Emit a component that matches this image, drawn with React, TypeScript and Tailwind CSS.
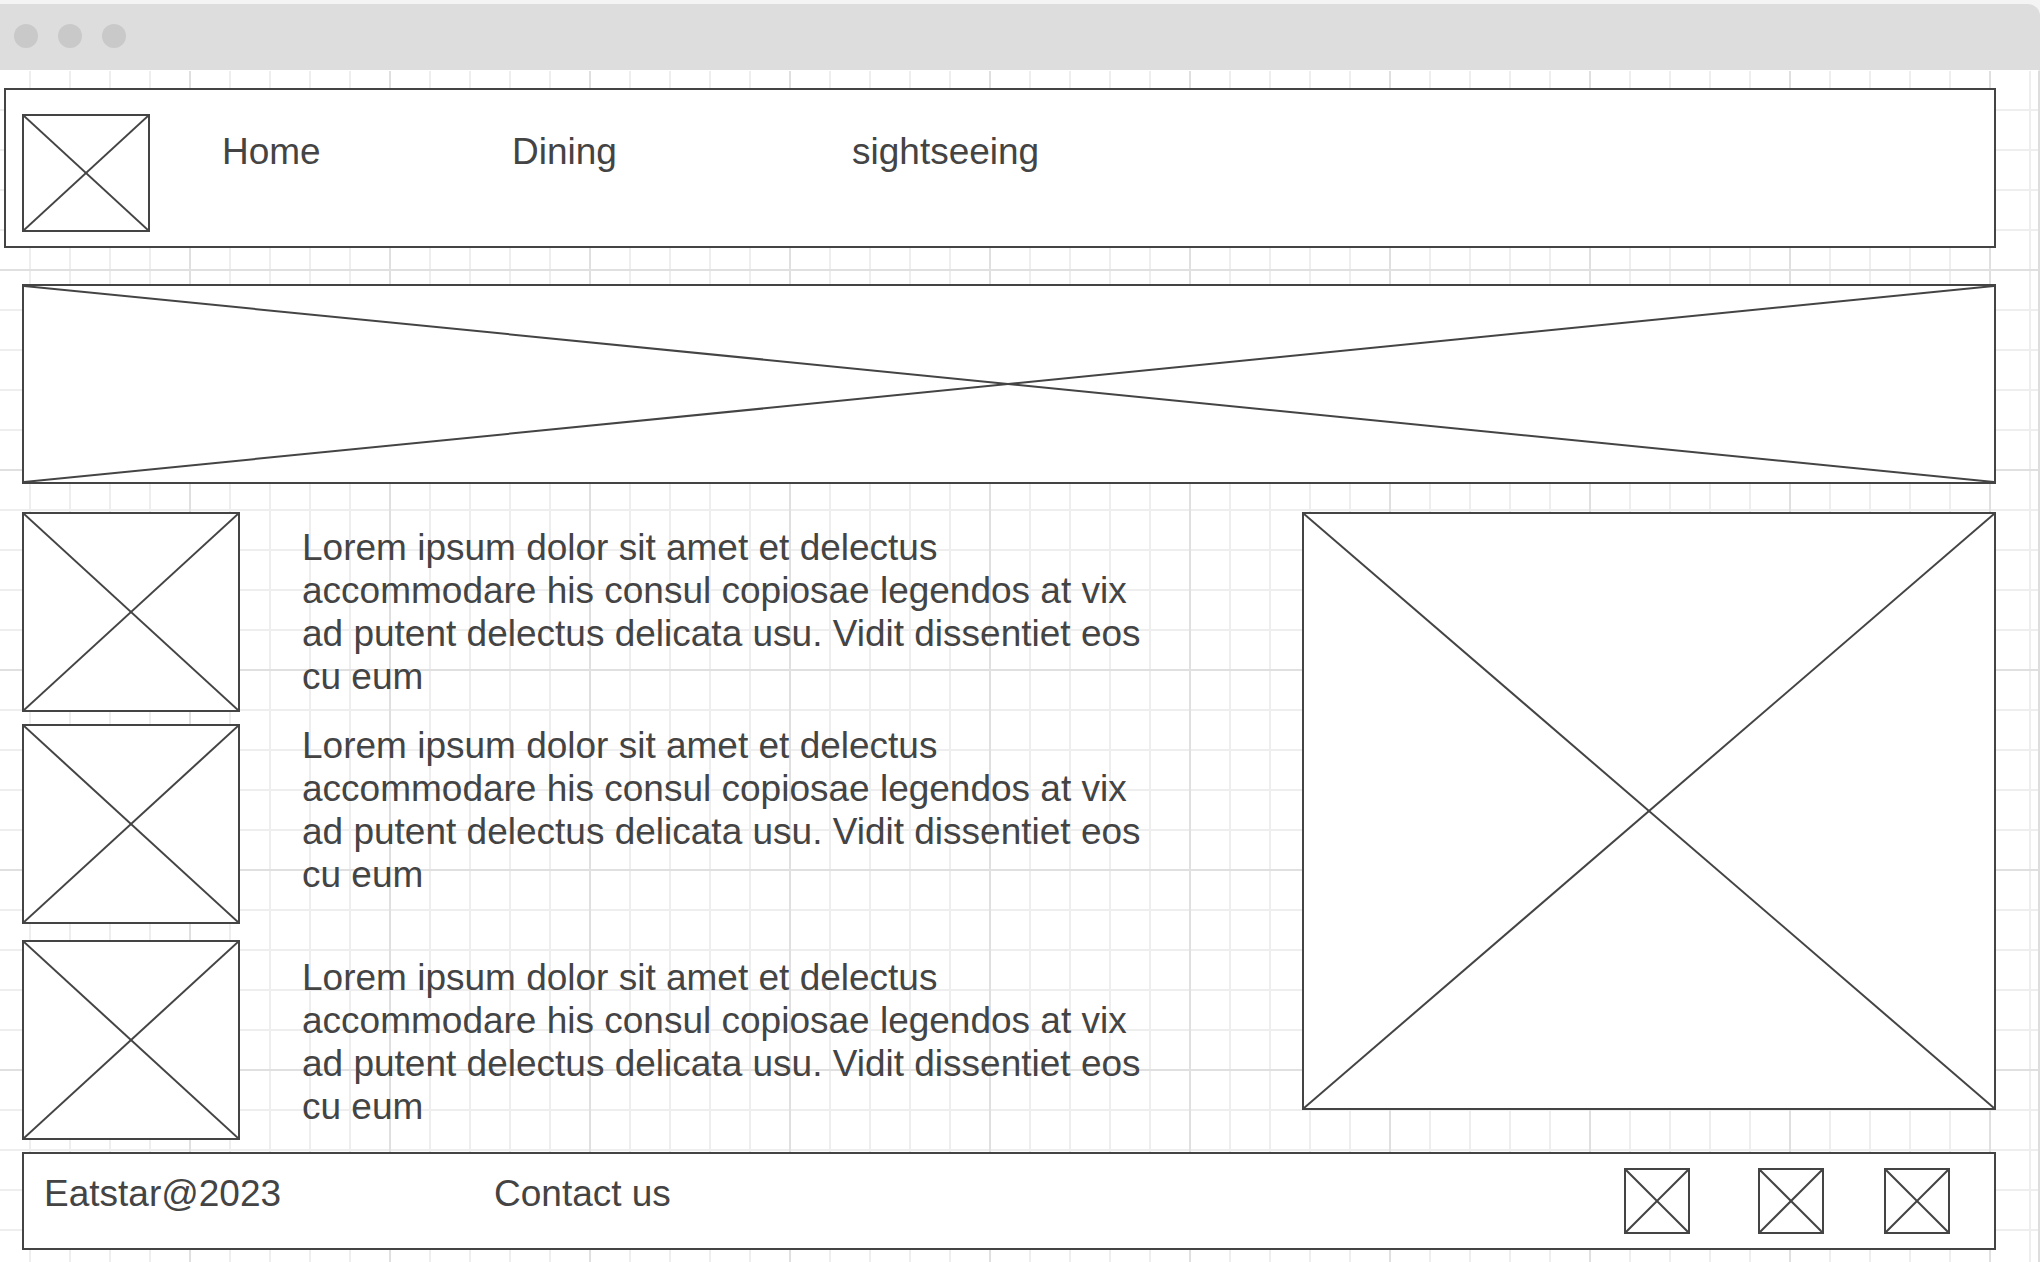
import React from "react";

const LOREM =
  "Lorem ipsum dolor sit amet et delectus accommodare his consul copiosae legendos at vix ad putent delectus delicata usu. Vidit dissentiet eos cu eum";

/** Image placeholder: an outlined box crossed by its two diagonals. */
function Placeholder({ className, label }: { className: string; label: string }) {
  return (
    <div role="img" aria-label={label} className={`border-2 border-[#444] bg-white ${className}`}>
      <svg className="block h-full w-full" stroke="#444" strokeWidth="2" aria-hidden="true">
        <line x1="0" y1="0" x2="100%" y2="100%" />
        <line x1="0" y1="100%" x2="100%" y2="0" />
      </svg>
    </div>
  );
}

function TitleBar() {
  return (
    <div className="flex h-[66px] items-center gap-5 rounded-tr-xl bg-[#ddd] pb-0.5 pl-3.5">
      <span className="size-6 rounded-full bg-[#c9c9c9]" />
      <span className="size-6 rounded-full bg-[#c9c9c9]" />
      <span className="size-6 rounded-full bg-[#c9c9c9]" />
    </div>
  );
}

function Header() {
  return (
    <header className="ml-1 flex items-start border-2 border-[#444] bg-white pt-6 pb-3.5 pl-4">
      <Placeholder label="Logo" className="h-[118px] w-32" />
      <nav className="mt-4 ml-[72px] flex">
        <a href="#home" className="w-[290px]">Home</a>
        <a href="#dining" className="w-[340px]">Dining</a>
        <a href="#sightseeing">sightseeing</a>
      </nav>
    </header>
  );
}

function Item({ className, textClassName }: { className: string; textClassName: string }) {
  return (
    <article className={`flex items-start ${className}`}>
      <Placeholder label="Thumbnail" className="h-[200px] w-[218px] shrink-0" />
      <p className={`ml-[62px] max-w-[850px] ${textClassName}`}>{LOREM}</p>
    </article>
  );
}

function Footer() {
  return (
    <footer className="mt-3 ml-[22px] flex items-start border-2 border-[#444] bg-white py-3.5 pr-11 pl-5">
      <span className="mt-1 w-[450px]">Eatstar@2023</span>
      <a href="#contact" className="mt-1">Contact us</a>
      <div className="ml-auto flex">
        <Placeholder label="Social link" className="mr-[68px] size-[66px]" />
        <Placeholder label="Social link" className="mr-[60px] size-[66px]" />
        <Placeholder label="Social link" className="size-[66px]" />
      </div>
    </footer>
  );
}

export default function App() {
  return (
    <div className="flex min-h-screen flex-col bg-[#f4f4f4] pt-1 font-['Liberation_Sans',Arial,sans-serif] text-[37px] leading-[43px] text-[#444]">
      <TitleBar />
      <div className="grow border-t border-r-2 border-t-white border-r-[#ddd] bg-white bg-[linear-gradient(to_right,#e0e0e0_2px,transparent_2px),linear-gradient(to_bottom,#e0e0e0_2px,transparent_2px),linear-gradient(to_right,#eee_2px,transparent_2px),linear-gradient(to_bottom,#eee_2px,transparent_2px)] bg-[size:200px_200px,200px_200px,40px_40px,40px_40px] bg-[position:189px_198px,189px_198px,29px_38px,29px_38px] pt-[17px] pr-[42px] pb-3">
        <Header />
        <Placeholder label="Banner" className="mt-9 ml-[22px] h-[200px]" />
        <main className="mt-7 ml-[22px] flex items-start justify-between">
          <div>
            <Item className="" textClassName="mt-3.5" />
            <Item className="mt-3" textClassName="" />
            <Item className="mt-4" textClassName="mt-4" />
          </div>
          <Placeholder label="Feature" className="h-[598px] w-[694px] shrink-0" />
        </main>
        <Footer />
      </div>
    </div>
  );
}
